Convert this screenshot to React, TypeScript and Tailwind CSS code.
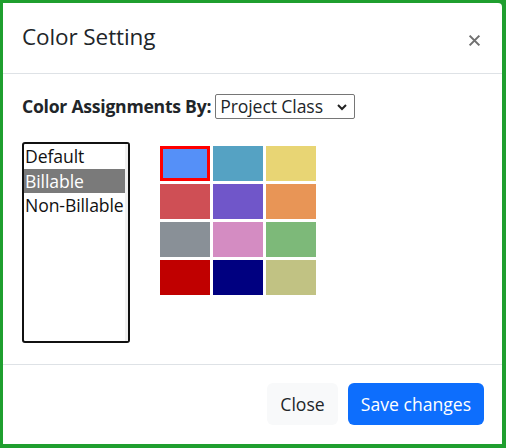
import React from "react";

const colors = [
  "#5590f8", "#55a2c3", "#e8d574",
  "#cf4f55", "#7056c9", "#e89556",
  "#899097", "#d48cc2", "#7db979",
  "#c00000", "#000080", "#c1c283",
];

export default function App() {
  return (
    <div
      className="w-[506px] h-[448px] bg-[#1f9f2f] pt-[3px] pl-[3px] pr-[4px] pb-[4px] text-[#212529]"
      style={{ fontFamily: '"Open Sans", "Noto Sans", sans-serif' }}
    >
      <div className="w-full h-full bg-white rounded-tr-[4px] flex flex-col">
        {/* header */}
        <div className="h-[71px] shrink-0 border-b border-[#dee2e6] flex items-center justify-between pl-[19px] pr-[21px]">
          <div className="text-[22.5px] leading-[30px] font-medium tracking-[-0.1px] -mt-[2px]">Color Setting</div>
          <svg width="13" height="13" viewBox="0 0 16 16" className="mt-[5px]">
            <path d="M2 2 L14 14 M14 2 L2 14" stroke="#707070" strokeWidth="2.6" strokeLinecap="butt" />
          </svg>
        </div>
        {/* body */}
        <div className="flex-1 pl-[19px] pt-[20px]">
          <div className="flex items-center h-[25px]">
            <span className="text-[17.6px] font-bold tracking-[-0.25px] mr-[4px]">Color Assignments By:</span>
            <div className="relative w-[140px] h-[25px] border border-[#767676] rounded-[2px] flex items-center pl-[4px]">
              <span className="text-[17.6px] tracking-[-0.1px] leading-none">Project Class</span>
              <svg width="10" height="7" viewBox="0 0 10 7" className="absolute right-[7px] top-[9px]">
                <path d="M1 1 L5 5 L9 1" stroke="#222" strokeWidth="2" fill="none" />
              </svg>
            </div>
          </div>
          <div className="flex mt-[23px]">
            <div className="w-[108px] h-[201px] border-2 border-[#111] rounded-[3px] flex">
              <div className="flex-1 flex flex-col text-[17.6px] leading-[24.5px] tracking-[-0.1px] text-[#111]">
                <div className="pl-[1px]">Default</div>
                <div className="pl-[1px] bg-[#7a7a7a] text-white">Billable</div>
                <div className="pl-[1px] whitespace-nowrap">Non-Billable</div>
              </div>
              <div className="w-[3px] bg-[#f1f1f1]" />
            </div>
            <div className="ml-[30px] mt-[4px] grid grid-cols-[50px_50px_50px] auto-rows-[35px] gap-[3px] h-fit">
              {colors.map((c, i) => (
                <div
                  key={i}
                  className={i === 0 ? "border-[3px] border-[#ff0000]" : ""}
                  style={{ backgroundColor: c }}
                />
              ))}
            </div>
          </div>
        </div>
        {/* footer */}
        <div className="h-[80px] shrink-0 border-t border-[#dee2e6] flex items-start justify-end pr-[18px] pt-[18px]">
          <button className="w-[71px] h-[42px] rounded-[6px] bg-[#f8f9fa] text-[17.6px] text-[#212529] mr-[10px]">Close</button>
          <button className="w-[136px] h-[42px] rounded-[6px] bg-[#0d6efd] text-[17.6px] text-white">Save changes</button>
        </div>
      </div>
    </div>
  );
}
